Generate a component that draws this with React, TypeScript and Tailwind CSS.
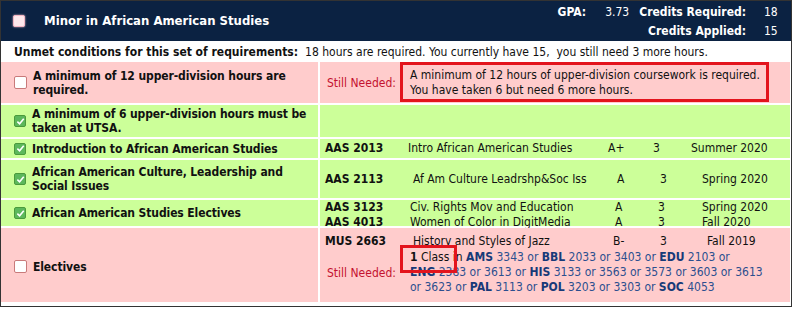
import React from 'react'

const FONT = 'font-["DejaVu_Sans_Condensed","DejaVu_Sans",sans-serif] [font-stretch:condensed]'

function Box({ checked, header }: { checked?: boolean; header?: boolean }) {
  if (checked) {
    return (
      <span className="inline-flex h-[12px] w-[12px] shrink-0 items-center justify-center rounded-[2px] bg-[#5cb85c] border border-[#4a9a3c]">
        <svg viewBox="0 0 10 10" className="h-[9px] w-[9px]">
          <path d="M1.5 5.2 L4 7.6 L8.6 2" fill="none" stroke="#fff" strokeWidth="1.8" />
        </svg>
      </span>
    )
  }
  if (header) {
    return <span className="inline-block h-[12px] w-[12px] shrink-0 rounded-[2px] bg-[#fde8ec] border border-[#f3b6c3] shadow-[0_0_2px_#f7c8d2]" />
  }
  return <span className="inline-block h-[13px] w-[13px] shrink-0 rounded-[2px] bg-white border border-[#c97a7a]" />
}

type Course = { code: string; title: string; grade: string; cr: string; term: string }

function CourseLine({ c, cols, lh = 'leading-[15px]' }: { c: Course; cols: string; lh?: string }) {
  return (
    <div className={`grid ${cols} ${lh} whitespace-nowrap`}>
      <span className="font-bold">{c.code}</span>
      <span>{c.title}</span>
      <span>{c.grade}</span>
      <span>{c.cr}</span>
      <span>{c.term}</span>
    </div>
  )
}

function Left({ children, checked, pink, pt }: { children: React.ReactNode; checked?: boolean; pink?: boolean; pt?: string }) {
  return (
    <div className={`flex w-[317px] shrink-0 items-center gap-[6px] pl-[13px] pr-1 ${pt ?? ''} ${pink ? 'bg-[#ffcccc]' : 'bg-[#ccff99]'}`}>
      <Box checked={checked} />
      <div className="font-bold leading-[14px] whitespace-nowrap tracking-[-0.1px]">{children}</div>
    </div>
  )
}

const C = ({ children }: { children: React.ReactNode }) => <b className="text-[#173a78]">{children}</b>
const N = ({ children }: { children: React.ReactNode }) => <span className="text-[#2c4f8f]">{children}</span>

export default function App() {
  return (
    <div className={`${FONT} w-[792px] h-[309px] bg-white text-[12px] text-[#111]`}>
      <div className="w-[792px] h-[307px] border border-[#333] flex flex-col bg-white">
        <div className="h-[40px] bg-[#0b2242] text-white flex items-center pl-[12px] pr-[14px] whitespace-nowrap">
          <Box header />
          <span className="ml-[19px] font-bold text-[13px]">Minor in African American Studies</span>
          <div className="ml-auto flex flex-col leading-[19px] pt-[1px]">
            <div className="flex justify-end">
              <span className="font-bold">GPA:</span>
              <span className="pl-[19px] pr-[10px]">3.73</span>
              <span className="font-bold">Credits Required:</span>
              <span className="w-[13px] pl-[18px] box-content">18</span>
            </div>
            <div className="flex justify-end">
              <span className="font-bold">Credits Applied:</span>
              <span className="w-[13px] pl-[18px] box-content">15</span>
            </div>
          </div>
        </div>

        <div className="h-[21px] flex items-center pl-[13px] whitespace-nowrap">
          <span className="font-bold">Unmet conditions for this set of requirements:</span>
          <span className="ml-[7px] whitespace-pre">18 hours are required. You currently have 15,  you still need 3 more hours.</span>
        </div>

        <div className="flex flex-col gap-[2px] pr-[1px]">
          <div className="flex h-[41px] gap-[2px]">
            <Left pink>
              A minimum of 12 upper-division hours are<br />required.
            </Left>
            <div className="relative flex-1 bg-[#ffcccc] flex items-center pl-[7px]">
              <span className="text-[#c4122f] w-[83px] shrink-0">Still Needed:</span>
              <div className="leading-[15px] pt-[1px] whitespace-nowrap">
                A minimum of 12 hours of upper-division coursework is required.<br />
                You have taken 6 but need 6 more hours.
              </div>
              <div className="absolute left-[80px] top-[0px] w-[369px] h-[40px] border-[3px] border-[#e3141d]" />
            </div>
          </div>

          <div className="flex h-[32px] gap-[2px]">
            <Left checked>
              A minimum of 6 upper-division hours must be<br />taken at UTSA.
            </Left>
            <div className="flex-1 bg-[#ccff99]" />
          </div>

          <div className="flex h-[19px] gap-[2px]">
            <Left checked>Introduction to African American Studies</Left>
            <div className="flex-1 bg-[#ccff99] flex items-center pl-[5px]">
              <div className="w-full">
                <CourseLine cols="grid-cols-[83px_200px_45px_38px_1fr]" c={{ code: 'AAS 2013', title: 'Intro African American Studies', grade: 'A+', cr: '3', term: 'Summer 2020' }} />
              </div>
            </div>
          </div>

          <div className="flex h-[38px] gap-[2px]">
            <Left checked>
              African American Culture, Leadership and<br />Social Issues
            </Left>
            <div className="flex-1 bg-[#ccff99] flex items-center pl-[5px]">
              <div className="w-full">
                <CourseLine cols="grid-cols-[88px_204px_43px_42px_1fr]" c={{ code: 'AAS 2113', title: 'Af Am Culture Leadrshp&Soc Iss', grade: 'A', cr: '3', term: 'Spring 2020' }} />
              </div>
            </div>
          </div>

          <div className="flex h-[26px] gap-[2px]">
            <Left checked>African American Studies Electives</Left>
            <div className="flex-1 bg-[#ccff99] flex items-center pl-[5px] pt-[3px]">
              <div className="w-full">
                <CourseLine cols="grid-cols-[85px_205px_43px_44px_1fr]" c={{ code: 'AAS 3123', title: 'Civ. Rights Mov and Education', grade: 'A', cr: '3', term: 'Spring 2020' }} />
                <CourseLine cols="grid-cols-[85px_205px_43px_44px_1fr]" c={{ code: 'AAS 4013', title: 'Women of Color in DigitMedia', grade: 'A', cr: '3', term: 'Fall 2020' }} />
              </div>
            </div>
          </div>

          <div className="flex h-[74px] gap-[2px]">
            <Left pink pt="pt-[3px]">Electives</Left>
            <div className="relative flex-1 bg-[#ffcccc] flex flex-col pl-[5px] pt-[6px]">
              <CourseLine cols="grid-cols-[88px_200px_47px_47px_1fr]" c={{ code: 'MUS 2663', title: 'History and Styles of Jazz', grade: 'B-', cr: '3', term: 'Fall 2019' }} />
              <div className="flex items-center mt-[1px]">
                <span className="text-[#c4122f] w-[85px] shrink-0 pl-[2px]">Still Needed:</span>
                <div className="leading-[15px] text-[#2c4f8f] whitespace-nowrap">
                  <span className="text-[#111]"><b>1</b> Class in </span><C>AMS</C> <N>3343</N> or <C>BBL</C> <N>2033</N> or <N>3403</N> or <C>EDU</C> <N>2103</N> or<br />
                  <C>ENG</C> <N>2383</N> or <N>3613</N> or <C>HIS</C> <N>3133</N> or <N>3563</N> or <N>3573</N> or <N>3603</N> or <N>3613</N><br />
                  or <N>3623</N> or <C>PAL</C> <N>3113</N> or <C>POL</C> <N>3203</N> or <N>3303</N> or <C>SOC</C> <N>4053</N>
                </div>
              </div>
              <div className="absolute left-[80px] top-[17px] w-[57px] h-[28px] border-[3px] border-[#e3141d]" />
            </div>
          </div>
        </div>
      </div>
    </div>
  )
}
